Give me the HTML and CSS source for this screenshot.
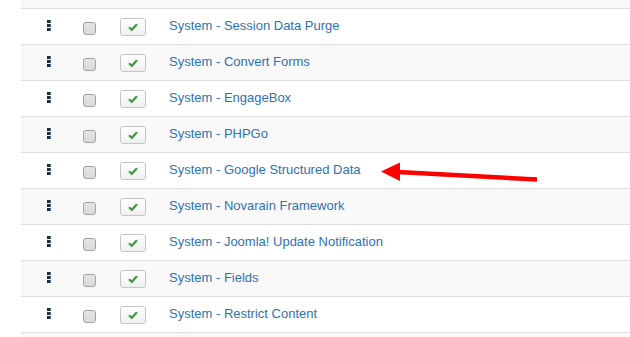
FILE: index.html
```html
<!DOCTYPE html>
<html lang="en">
<head>
  <meta charset="UTF-8">
  <title>Plugins</title>
  <link rel="stylesheet" href="styles.css">
</head>
<body>
  <div class="list">
    <div class="row top"></div>

    <div class="row">
      <span class="handle"><i></i><i></i><i></i></span>
      <span class="box"></span>
      <span class="state"><svg viewBox="0 0 10 8"><path d="M1 4.2 L3.8 6.8 L9 1.2"/></svg></span>
      <a href="#" class="title">System - Session Data Purge</a>
    </div>
    <div class="row">
      <span class="handle"><i></i><i></i><i></i></span>
      <span class="box"></span>
      <span class="state"><svg viewBox="0 0 10 8"><path d="M1 4.2 L3.8 6.8 L9 1.2"/></svg></span>
      <a href="#" class="title">System - Convert Forms</a>
    </div>
    <div class="row">
      <span class="handle"><i></i><i></i><i></i></span>
      <span class="box"></span>
      <span class="state"><svg viewBox="0 0 10 8"><path d="M1 4.2 L3.8 6.8 L9 1.2"/></svg></span>
      <a href="#" class="title">System - EngageBox</a>
    </div>
    <div class="row">
      <span class="handle"><i></i><i></i><i></i></span>
      <span class="box"></span>
      <span class="state"><svg viewBox="0 0 10 8"><path d="M1 4.2 L3.8 6.8 L9 1.2"/></svg></span>
      <a href="#" class="title">System - PHPGo</a>
    </div>
    <div class="row">
      <span class="handle"><i></i><i></i><i></i></span>
      <span class="box"></span>
      <span class="state"><svg viewBox="0 0 10 8"><path d="M1 4.2 L3.8 6.8 L9 1.2"/></svg></span>
      <a href="#" class="title">System - Google Structured Data</a>
    </div>
    <div class="row">
      <span class="handle"><i></i><i></i><i></i></span>
      <span class="box"></span>
      <span class="state"><svg viewBox="0 0 10 8"><path d="M1 4.2 L3.8 6.8 L9 1.2"/></svg></span>
      <a href="#" class="title">System - Novarain Framework</a>
    </div>
    <div class="row">
      <span class="handle"><i></i><i></i><i></i></span>
      <span class="box"></span>
      <span class="state"><svg viewBox="0 0 10 8"><path d="M1 4.2 L3.8 6.8 L9 1.2"/></svg></span>
      <a href="#" class="title">System - Joomla! Update Notification</a>
    </div>
    <div class="row">
      <span class="handle"><i></i><i></i><i></i></span>
      <span class="box"></span>
      <span class="state"><svg viewBox="0 0 10 8"><path d="M1 4.2 L3.8 6.8 L9 1.2"/></svg></span>
      <a href="#" class="title">System - Fields</a>
    </div>
    <div class="row">
      <span class="handle"><i></i><i></i><i></i></span>
      <span class="box"></span>
      <span class="state"><svg viewBox="0 0 10 8"><path d="M1 4.2 L3.8 6.8 L9 1.2"/></svg></span>
      <a href="#" class="title">System - Restrict Content</a>
    </div>
    <div class="row end"></div>
  </div>

  <!-- annotation arrow -->
  <svg class="arrow" width="630" height="337" viewBox="0 0 630 337">
    <line x1="398" y1="172" x2="537" y2="179.5" stroke="#ff0000" stroke-width="4.5"/>
    <polygon points="381,171.5 400,162.5 400,181" fill="#ff0000"/>
  </svg>
</body>
</html>
```

FILE: styles.css
```css
body {
  margin: 0;
  background: #fff;
  font-family: "Liberation Sans", Arial, sans-serif;
  font-size: 13px;
  overflow: hidden;
}
.list {
  margin-left: 21px;
}
.row {
  display: grid;
  grid-template-columns: 62px 37px 49px 1fr;
  height: 35px;
  border-top: 1px solid #ddd;
}
.row:nth-child(odd) {
  background: #f9f9f9;
}
.row.top {
  height: 8px;
  border-top: none;
}
.row.end {
  height: 4px;
}
.handle {
  margin: 11px 0 0 26px;
  display: flex;
  flex-direction: column;
  gap: 1px;
}
.handle i {
  display: block;
  width: 3px;
  height: 3px;
  background: #2b2b2b;
  box-shadow: 1px 0 0 #3f6fb0;
}
.box {
  margin-top: 13px;
  width: 11px;
  height: 11px;
  border: 1px solid #a3a3a3;
  border-radius: 3px;
  background: linear-gradient(#e6e6e6, #d9d9d9);
}
.state {
  margin-top: 9px;
  width: 24px;
  height: 16px;
  border: 1px solid #c4c4c4;
  border-radius: 3px;
  background: linear-gradient(#fff, #f0f0f0);
  display: flex;
  align-items: center;
  justify-content: center;
}
.state svg {
  width: 10px;
  height: 8px;
}
.state path {
  fill: none;
  stroke: #3c9a3c;
  stroke-width: 2.2;
}
.title {
  align-self: start;
  margin-top: 8px;
  color: #3071b4;
  text-decoration: none;
  line-height: 18px;
}
.arrow {
  position: absolute;
  left: 0;
  top: 0;
  pointer-events: none;
}
```
